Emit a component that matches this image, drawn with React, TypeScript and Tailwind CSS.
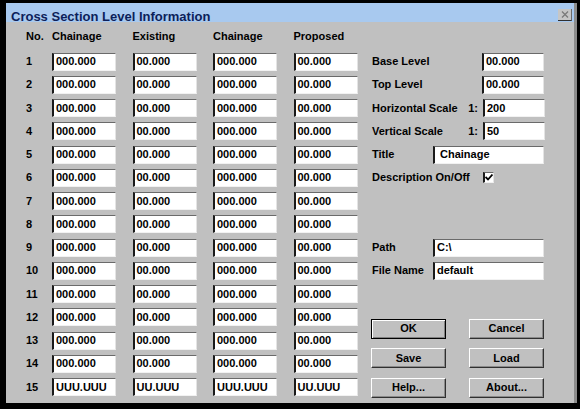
import React from "react";

const rows = Array.from({ length: 15 }, (_, i) => i + 1);

function Field({ value, className = "" }: { value: string; className?: string }) {
  return (
    <div
      className={`h-[18px] bg-white border-l-2 border-l-[#1a1a1a] border-t border-t-[#6a6a6a] border-r border-r-[#e4e4e4] border-b border-b-[#f2f2f2] pl-[2px] flex items-center text-[11px] font-bold leading-none text-black whitespace-nowrap overflow-hidden ${className}`}
    >
      {value}
    </div>
  );
}

function Btn({ label, def = false }: { label: string; def?: boolean }) {
  return (
    <div
      className={`h-[20px] w-[75px] flex items-center justify-center text-[11px] font-bold text-black bg-[#c0c0c0] border ${
        def
          ? "border-black shadow-[inset_1px_1px_0_#ffffff,inset_-1px_-1px_0_#808080]"
          : "border-t-white border-l-white border-r-[#303030] border-b-[#303030] shadow-[inset_-1px_-1px_0_#8a8a8a]"
      }`}
    >
      {label}
    </div>
  );
}

function CheckBox() {
  return (
    <div className="w-[11px] h-[11px] bg-white border-l-2 border-l-[#1a1a1a] border-t border-t-[#6a6a6a] border-r border-r-[#e4e4e4] border-b border-b-[#f2f2f2] flex items-center justify-center">
      <svg width="8" height="7" viewBox="0 0 8 7">
        <polyline points="0.5,3 3,5.5 7.5,0.5" fill="none" stroke="#000" strokeWidth="1.8" />
      </svg>
    </div>
  );
}

function value(row: number, wide: boolean) {
  if (row === 15) return wide ? "UUU.UUU" : "UU.UUU";
  return wide ? "000.000" : "00.000";
}

export default function App() {
  return (
    <div className="w-[580px] h-[409px] bg-black pt-[3px] pl-[6px] font-['Liberation_Sans',Arial,sans-serif]">
      <div className="w-[571px] h-[400px] bg-[#c0c0c0] flex flex-col border-r-[3px] border-r-[#8c8c8c]">
        {/* title bar */}
        <div className="h-[19px] shrink-0 bg-[#a8c9ef] flex items-start justify-between pl-[5px] pr-[2px]">
          <span className="mt-[7px] text-[13px] leading-[13px] font-bold text-[#0c1f5a] whitespace-nowrap">
            Cross Section Level Information
          </span>
          <div className="mt-[6px] w-[14px] h-[12px] bg-[#c6c6c6] border-b border-b-[#303030] border-r border-r-[#6a6a6a] flex items-center justify-center">
            <svg width="8" height="7" viewBox="0 0 8 7">
              <path d="M1 0.5 L7 6.5 M7 0.5 L1 6.5" stroke="#7a7a7a" strokeWidth="1.3" />
            </svg>
          </div>
        </div>

        <div className="flex pl-[20px]">
          {/* table */}
          <div className="grid grid-cols-[9.5px_64px_64px_64px_64px] gap-x-[16.5px]">
            {["No.", "Chainage", "Existing", "Chainage", "Proposed"].map((h, i) => (
              <div key={i} className="h-[28px] pt-[8.5px] text-[11px] leading-none font-bold text-black whitespace-nowrap">
                {h}
              </div>
            ))}
            {rows.map((r) => (
              <React.Fragment key={r}>
                <div className="h-[23.25px] flex items-center text-[11px] font-bold text-black leading-none whitespace-nowrap">{r}</div>
                <div className="h-[23.25px] flex items-center"><Field value={value(r, true)} className="w-full" /></div>
                <div className="h-[23.25px] flex items-center"><Field value={value(r, false)} className="w-full" /></div>
                <div className="h-[23.25px] flex items-center"><Field value={value(r, true)} className="w-full" /></div>
                <div className="h-[23.25px] flex items-center"><Field value={value(r, false)} className="w-full" /></div>
              </React.Fragment>
            ))}
          </div>

          {/* right panel */}
          <div className="ml-[14.5px] w-[173px] pt-[28px] flex flex-col text-[11px] font-bold text-black leading-none">
            <div className="h-[23.25px] flex items-center">
              <span className="w-[110px]">Base Level</span>
              <Field value="00.000" className="w-[62px]" />
            </div>
            <div className="h-[23.25px] flex items-center">
              <span className="w-[110px]">Top Level</span>
              <Field value="00.000" className="w-[62px]" />
            </div>
            <div className="h-[23.25px] flex items-center">
              <span className="flex-1 whitespace-nowrap">Horizontal Scale</span>
              <span className="mr-[5px]">1:</span>
              <Field value="200" className="w-[62px]" />
            </div>
            <div className="h-[23.25px] flex items-center">
              <span className="flex-1 whitespace-nowrap">Vertical Scale</span>
              <span className="mr-[5px]">1:</span>
              <Field value="50" className="w-[62px]" />
            </div>
            <div className="h-[23.25px] flex items-center">
              <span className="w-[61px]">Title</span>
              <Field value="Chainage" className="w-[111px] pl-[5px]" />
            </div>
            <div className="h-[23.25px] flex items-center">
              <span className="w-[111px] whitespace-nowrap">Description On/Off</span>
              <CheckBox />
            </div>
            <div className="h-[46.5px]" />
            <div className="h-[23.25px] flex items-center">
              <span className="w-[61px]">Path</span>
              <Field value="C:\" className="w-[111px]" />
            </div>
            <div className="h-[23.25px] flex items-center">
              <span className="w-[61px] whitespace-nowrap">File Name</span>
              <Field value="default" className="w-[111px]" />
            </div>

            <div className="mt-[36px] -ml-[1px] grid grid-cols-[75px_75px] gap-x-[23px] gap-y-[9.5px]">
              <Btn label="OK" def />
              <Btn label="Cancel" />
              <Btn label="Save" />
              <Btn label="Load" />
              <Btn label="Help..." />
              <Btn label="About..." />
            </div>
          </div>
        </div>
      </div>
    </div>
  );
}
